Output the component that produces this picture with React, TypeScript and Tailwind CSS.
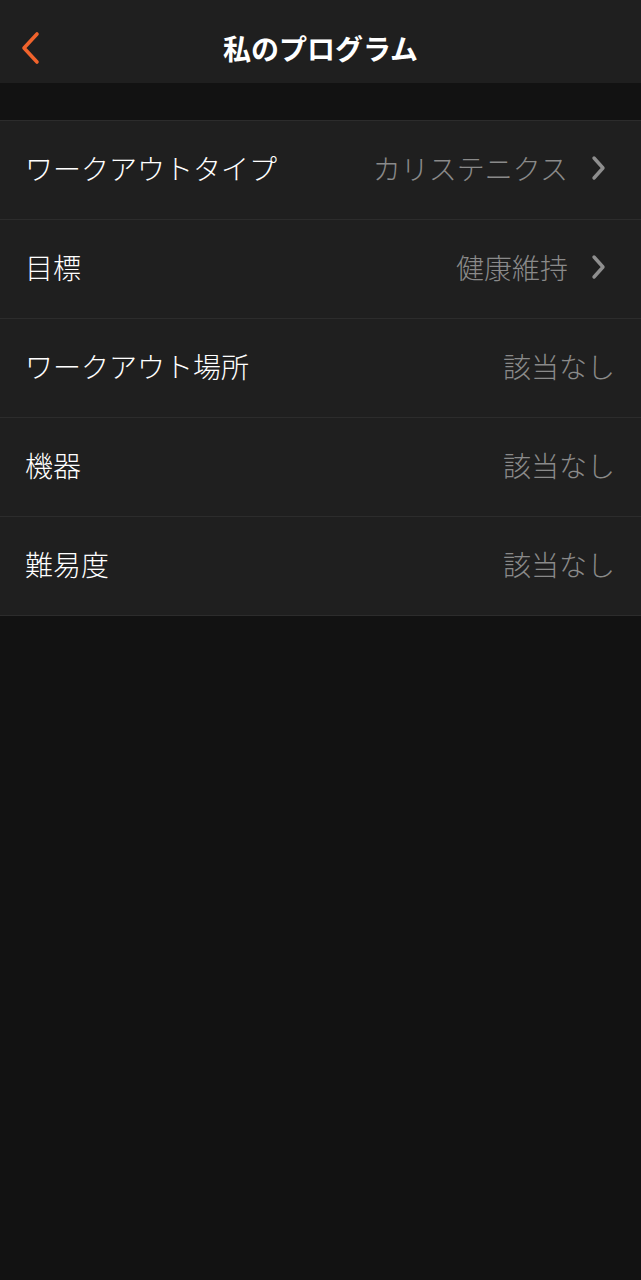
const rows = [
  { label: 'ワークアウトタイプ', value: 'カリステニクス', link: true },
  { label: '目標', value: '健康維持', link: true },
  { label: 'ワークアウト場所', value: '該当なし', link: false },
  { label: '機器', value: '該当なし', link: false },
  { label: '難易度', value: '該当なし', link: false },
];

const font = { fontFamily: '"Noto Sans CJK JP", "Noto Sans", sans-serif' };

export default function App() {
  return (
    <div className="min-h-[1280px] w-full bg-[#121212]" style={font}>
      {/* header */}
      <div className="relative flex h-[83px] items-center justify-center bg-[#1f1f1f] pt-3">
        <button className="absolute left-[18px] top-[30px] p-0">
          <svg width="26" height="36" viewBox="0 0 26 36" fill="none">
            <path d="M19 4 L6 18 L19 32" stroke="#f0632c" strokeWidth="3.6" strokeLinecap="round" strokeLinejoin="round" />
          </svg>
        </button>
        <h1 className="text-[28px] font-bold leading-none text-white">私のプログラム</h1>
      </div>

      <div className="h-[37px]" />

      <div className="border-t border-[#2c2c2c]">
        {rows.map((r) => (
          <div
            key={r.label}
            className="flex h-[99px] items-center justify-between border-b border-[#2c2c2c] bg-[#1f1f1f] pb-[4px] pl-[25px] pr-[26px]"
          >
            <span className="text-[28px] font-light leading-none text-white">{r.label}</span>
            <div className="flex items-center">
              <span className="text-[28px] font-light leading-none text-[#8a8a8a]">{r.value}</span>
              {r.link && (
                <svg className="ml-[21px] mr-[8px]" width="18" height="26" viewBox="0 0 18 26" fill="none">
                  <path d="M5 3 L14 13 L5 23" stroke="#8e8e8e" strokeWidth="3.4" strokeLinecap="round" strokeLinejoin="round" />
                </svg>
              )}
            </div>
          </div>
        ))}
      </div>
    </div>
  );
}
